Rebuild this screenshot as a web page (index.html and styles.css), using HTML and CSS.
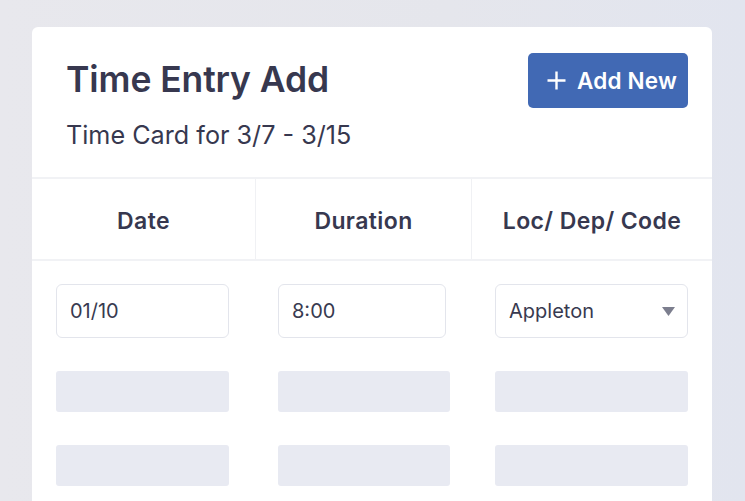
FILE: index.html
```html
<!DOCTYPE html>
<html>
<head>
<meta charset="utf-8">
<link rel="stylesheet" href="styles.css">
</head>
<body>
<div class="card">
  <div class="card-head">
    <div class="titles">
      <h1 class="title">Time Entry Add</h1>
      <p class="subtitle">Time Card for 3/7 - 3/15</p>
    </div>
    <button class="add-btn">
      <svg class="plus" width="19" height="19" viewBox="0 0 19 19"><path d="M9.5 0.5v18M0.5 9.5h18" stroke="#fff" stroke-width="2.4" fill="none"/></svg>
      <span>Add New</span>
    </button>
  </div>
  <div class="table">
    <div class="thead">
      <div class="th">Date</div>
      <div class="th">Duration</div>
      <div class="th">Loc/ Dep/ Code</div>
    </div>
    <div class="row first">
      <div class="cell c1"><div class="input w1">01/10</div></div>
      <div class="cell c2"><div class="input w2">8:00</div></div>
      <div class="cell c3"><div class="input w3 select">Appleton<svg class="caret" width="13" height="9" viewBox="0 0 13 9"><path d="M0 0h13L6.5 9z" fill="#7c7e8e"/></svg></div></div>
    </div>
    <div class="row">
      <div class="cell c1"><div class="skel w1"></div></div>
      <div class="cell c2"><div class="skel s2"></div></div>
      <div class="cell c3"><div class="skel w3"></div></div>
    </div>
    <div class="row">
      <div class="cell c1"><div class="skel w1"></div></div>
      <div class="cell c2"><div class="skel s2"></div></div>
      <div class="cell c3"><div class="skel w3"></div></div>
    </div>
  </div>
</div>
</body>
</html>
```
FILE: styles.css
```css
* { box-sizing: border-box; }
html, body { margin: 0; padding: 0; }
body {
  background: linear-gradient(90deg, #e8e8ed 0%, #e5e6ec 60%, #e2e5ef 100%);
  font-family: Inter, "Noto Sans", sans-serif;
  color: #37384f;
  width: 745px;
  height: 501px;
  overflow: hidden;
  padding: 27px 33px 0 32px;
}
.card {
  background: #fff;
  border-radius: 6px 6px 0 0;
  width: 680px;
  height: 520px;
}
.card-head {
  display: flex;
  justify-content: space-between;
  align-items: flex-start;
  padding: 26px 24px 0 34px;
  height: 150px;
}
.title {
  margin: -1px 0 0;
  font-size: 35.5px;
  font-weight: 600;
  line-height: 55px;
  letter-spacing: -0.1px;
}
.subtitle {
  margin: 13px 0 0;
  font-size: 25.2px;
  line-height: 30px;
  font-weight: 400;
}
.add-btn {
  display: flex;
  align-items: center;
  gap: 11px;
  height: 55px;
  width: 160px;
  padding: 0 0 0 19px;
  border: none;
  border-radius: 5px;
  background: #4169b4;
  color: #fff;
  font-family: Inter, "Noto Sans", sans-serif;
  font-size: 22.5px;
  font-weight: 600;
  letter-spacing: 0.2px;
}
.thead {
  display: grid;
  grid-template-columns: 223px 216px 1fr;
  border-top: 2px solid #f1f2f5;
  border-bottom: 2px solid #f1f2f5;
  height: 84px;
}
.th {
  display: flex;
  align-items: center;
  justify-content: center;
  padding-top: 3px;
  font-size: 23px;
  font-weight: 600;
  letter-spacing: 0.4px;
  border-left: 1px solid #f0f1f4;
}
.th:first-child { border-left: none; }
.row {
  display: grid;
  grid-template-columns: 224px 216px 1fr;
  margin-top: 33px;
}
.row.first { margin-top: 23px; }
.c1 { padding-left: 24px; }
.c2 { padding-left: 22px; }
.c3 { padding-left: 23px; }
.w1 { width: 173px; }
.w2 { width: 168px; }
.s2 { width: 172px; }
.w3 { width: 193px; }
.input {
  height: 54px;
  border: 1px solid #e3e5ec;
  border-radius: 6px;
  display: flex;
  align-items: center;
  justify-content: space-between;
  padding: 0 12px 0 13px;
  font-size: 20px;
  color: #383a50;
}
.skel {
  height: 41px;
  background: #e8eaf2;
  border-radius: 3px;
}
```
